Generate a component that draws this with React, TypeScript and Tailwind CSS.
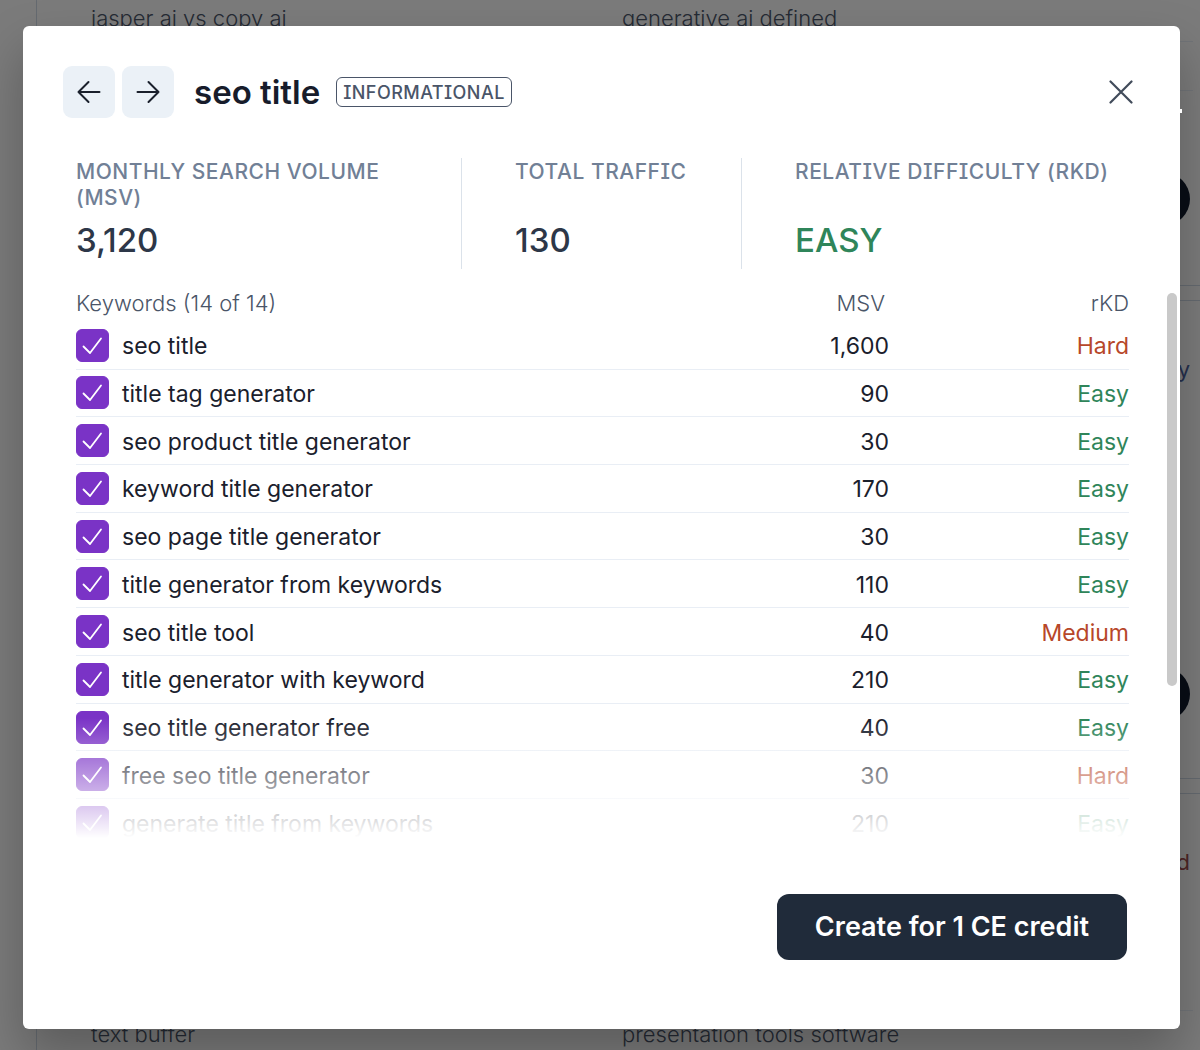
import clsx from "clsx";

type Difficulty = "Easy" | "Medium" | "Hard";

type Keyword = {
    name: string;
    msv: string;
    rkd: Difficulty;
};

const keywords: Keyword[] = [
    { name: "seo title", msv: "1,600", rkd: "Hard" },
    { name: "title tag generator", msv: "90", rkd: "Easy" },
    { name: "seo product title generator", msv: "30", rkd: "Easy" },
    { name: "keyword title generator", msv: "170", rkd: "Easy" },
    { name: "seo page title generator", msv: "30", rkd: "Easy" },
    { name: "title generator from keywords", msv: "110", rkd: "Easy" },
    { name: "seo title tool", msv: "40", rkd: "Medium" },
    { name: "title generator with keyword", msv: "210", rkd: "Easy" },
    { name: "seo title generator free", msv: "40", rkd: "Easy" },
    { name: "free seo title generator", msv: "30", rkd: "Hard" },
    { name: "generate title from keywords", msv: "210", rkd: "Easy" },
];

function ArrowButton({ direction }: { direction: "left" | "right" }) {
    return (
        <button
            type="button"
            aria-label={direction === "left" ? "Previous" : "Next"}
            className="flex size-[52px] items-center justify-center rounded-[9px] bg-[#ebf1f7] text-[#1a202c]"
        >
            <svg
                viewBox="0 0 24 24"
                className={clsx("size-6", direction === "right" && "-scale-x-100")}
                fill="none"
                stroke="currentColor"
                strokeWidth="2"
                strokeLinecap="round"
                strokeLinejoin="round"
            >
                <path d="M11.5 2 1.5 12l10 10M1.5 12h21" />
            </svg>
        </button>
    );
}

type StatProps = {
    label: string;
    value: string;
    className?: string;
    valueClassName?: string;
};
function Stat({ label, value, className, valueClassName = "text-[#2d3748]" }: StatProps) {
    return (
        <div className={clsx("flex flex-col justify-between", className)}>
            <dt className="pt-px text-[21px] leading-[26px] font-medium tracking-wide text-[#718096]">{label}</dt>
            <dd className={clsx("text-[33px] leading-[58px] font-medium", valueClassName)}>{value}</dd>
        </div>
    );
}

function KeywordRow({ name, msv, rkd }: Keyword) {
    return (
        <tr className="border-b border-[#e9eef5]">
            <td>
                <label className="flex items-center gap-[13px]">
                    <span className="grid size-[33px] shrink-0">
                        <input
                            type="checkbox"
                            defaultChecked
                            className="peer col-start-1 row-start-1 size-[33px] appearance-none rounded-md border border-[#7a33c6] checked:bg-[#7a33c6]"
                        />
                        <svg
                            viewBox="0 0 33 33"
                            className="pointer-events-none invisible col-start-1 row-start-1 size-[33px] peer-checked:visible"
                            fill="none"
                            stroke="#fff"
                            strokeWidth="1.8"
                            strokeLinecap="round"
                            strokeLinejoin="round"
                        >
                            <path d="M7.5 17.5 14 24 25 9.5" />
                        </svg>
                    </span>
                    <span className="pt-0.5">{name}</span>
                </label>
            </td>
            <td className="pt-0.5 text-right">{msv}</td>
            <td className={clsx("pt-0.5 text-right", rkd === "Easy" ? "text-[#2f855a]" : "text-[#b7472a]")}>{rkd}</td>
        </tr>
    );
}

function RoundButton() {
    return (
        <button type="button" aria-label="Create" className="mr-[10px] h-[54px] w-40 rounded-full bg-[#101a2c]" />
    );
}

// Keyword clusters list that stays visible behind the dialog
function Clusters() {
    return (
        <div className="flex h-full flex-col gap-[14px] overflow-hidden bg-[#f7f7f7] pl-9 text-[22px] font-light text-[#4a5568]">
            <section className="flex h-[286px] shrink-0 flex-col items-end border-b border-l border-[#cbd5e0]">
                <div className="flex h-[42px] w-full pr-[7px]">
                    <div className="grid flex-1 grid-cols-[531px_1fr] border-b border-[#e2e8f0] pl-[54px] leading-[36px]">
                        <span>jasper ai vs copy ai</span>
                        <span>generative ai defined</span>
                    </div>
                </div>
                <div className="mr-[7px] h-[49px] w-full border-b border-[#e2e8f0]" />
                <div className="mt-[81px]">
                    <RoundButton />
                </div>
            </section>
            <section className="flex h-[479px] shrink-0 flex-col items-end border-y border-l border-[#cbd5e0] pt-[52px]">
                <a href="#monthly" className="pr-[10px] font-normal text-[#4a5f9b]">monthly</a>
                <div className="mt-[281px]">
                    <RoundButton />
                </div>
            </section>
            <section className="flex flex-1 flex-col items-end border-t border-l border-[#cbd5e0] pt-[52px]">
                <span className="pr-[10px] font-normal text-[#9b4c4c]">Hard</span>
                <div className="mt-[131px] flex w-full pr-[7px]">
                    <div className="grid flex-1 grid-cols-[531px_1fr] border-t border-[#e2e8f0] pt-[5px] pl-[54px] leading-[36px]">
                        <span>text buffer</span>
                        <span>presentation tools software</span>
                    </div>
                </div>
            </section>
        </div>
    );
}

export default function App() {
    return (
        <div className="relative h-screen overflow-hidden font-['Inter','Liberation_Sans',sans-serif] [font-feature-settings:'cv08']">
            <Clusters />
            <div className="absolute inset-0 flex bg-black/50 pt-[26px] pr-5 pb-[21px] pl-[23px]">
                <div
                    role="dialog"
                    aria-modal="true"
                    aria-labelledby="dialog-title"
                    className="flex w-full flex-col rounded-md bg-white pt-10 pr-[51px] pb-[69px] pl-10 shadow-[0_25px_50px_rgba(0,0,0,0.25)]"
                >
                    <header className="flex items-center">
                        <div className="flex gap-[7px]">
                            <ArrowButton direction="left" />
                            <ArrowButton direction="right" />
                        </div>
                        <h1 id="dialog-title" className="ml-5 text-[33px] leading-10 font-semibold text-[#171c2b]">
                            seo title
                        </h1>
                        <span className="ml-4 rounded-md border border-[#4a5568] px-[6px] pt-px text-[18px] leading-[27px] font-medium tracking-wide text-[#4a5568]">
                            INFORMATIONAL
                        </span>
                        <button type="button" aria-label="Close" className="-mr-1 ml-auto text-[#414b5a]">
                            <svg
                                viewBox="0 0 24 24"
                                className="size-6"
                                fill="none"
                                stroke="currentColor"
                                strokeWidth="2.2"
                                strokeLinecap="round"
                            >
                                <path d="M1.5 1.5l21 21M22.5 1.5l-21 21" />
                            </svg>
                        </button>
                    </header>

                    <dl className="mt-10 ml-[13px] grid h-[111px] grid-cols-[385fr_280fr_388fr]">
                        <Stat label="MONTHLY SEARCH VOLUME (MSV)" value="3,120" className="pr-16" />
                        <Stat label="TOTAL TRAFFIC" value="130" className="border-l border-[#dbe2ea] pl-[53px]" />
                        <Stat
                            label="RELATIVE DIFFICULTY (RKD)"
                            value="EASY"
                            className="border-l border-[#dbe2ea] pl-[53px]"
                            valueClassName="text-[#2f855a]"
                        />
                    </dl>

                    <div className="relative mt-[17px] ml-[13px] h-[552px] overflow-hidden">
                        <table className="h-[561px] w-full text-[23px] leading-7 text-[#1a202c]">
                            <thead>
                                <tr className="h-9 text-[22px] leading-[26px] text-[#4a5568]">
                                    <th className="pb-0.5 text-left font-[350]">Keywords (14 of 14)</th>
                                    <th className="w-40 pr-1 pb-0.5 text-right font-[350]">MSV</th>
                                    <th className="w-60 pb-0.5 text-right font-[350]">rKD</th>
                                </tr>
                            </thead>
                            <tbody>
                                {keywords.map((keyword) => (
                                    <KeywordRow key={keyword.name} {...keyword} />
                                ))}
                            </tbody>
                        </table>
                        <div className="pointer-events-none absolute inset-x-0 bottom-0 h-[120px] bg-linear-to-b from-white/0 to-white" />
                    </div>

                    <button
                        type="button"
                        className="mt-auto mr-[2px] self-end rounded-xl bg-[#202b3a] px-[38px] text-[27px] leading-[66px] font-semibold text-white"
                    >
                        Create for 1 CE credit
                    </button>
                </div>
            </div>
            {/* scrollbar thumb */}
            <div className="absolute top-[293px] right-[23px] h-[393px] w-[10px] rounded-full bg-[#c9c9c9]" />
            {/* corner of the page's own close mark */}
            <div className="absolute top-[109px] right-[18px] h-1 w-0.5 bg-white" />
        </div>
    );
}
